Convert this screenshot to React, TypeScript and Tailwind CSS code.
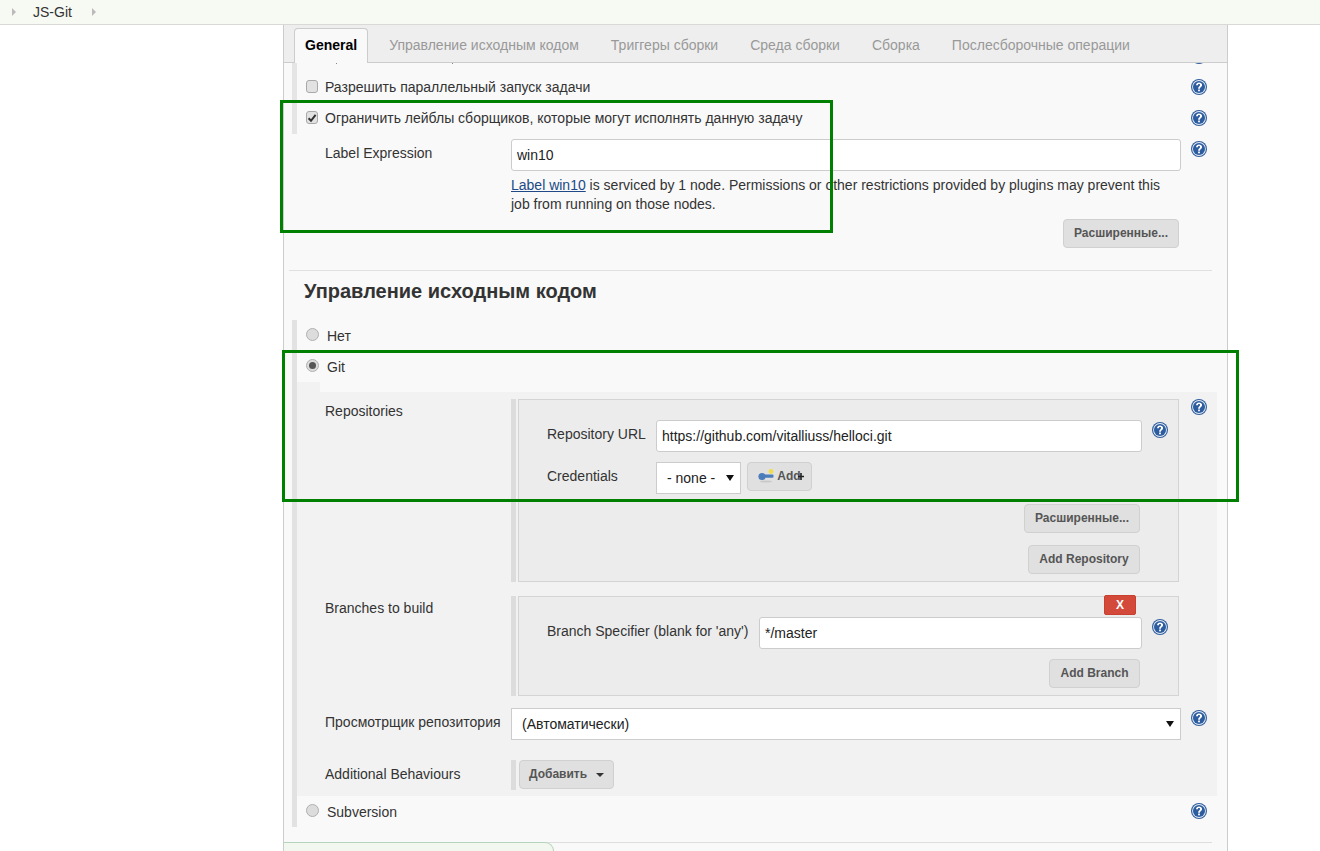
import type { ReactNode } from 'react';

const FONT = "font-['Liberation_Sans',Arial,sans-serif]";

function HelpIcon({ className = '' }: { className?: string }) {
  return (
    <svg width="16" height="16" viewBox="0 0 16 16" className={`shrink-0 ${className}`}>
      <circle cx="8" cy="8" r="8" fill="#2f5d9c" />
      <circle cx="8" cy="8" r="6.9" fill="#e6edf5" />
      <circle cx="8" cy="8" r="6" fill="#2d5c9f" />
      <path
        d="M5 6.2C5 4.5 6.3 3.4 8 3.4s3.1 1 3.1 2.6c0 2.1-2.2 2.1-2.2 3.7H7.1c0-2.4 2-2.5 2-3.7 0-.6-.5-1-1.1-1-.7 0-1.1.5-1.1 1.2z"
        fill="#fff"
      />
      <rect x="7.1" y="10.5" width="1.8" height="1.8" fill="#fff" />
    </svg>
  );
}

function Checkbox({ checked = false }: { checked?: boolean }) {
  return (
    <span className="flex h-[13px] w-[12px] shrink-0 items-center justify-center rounded-[3px] border border-[#a9a9a9] bg-[#e2e2e2]">
      {checked && (
        <svg width="10" height="10" viewBox="0 0 10 10">
          <path d="M1.6 5.2 4 7.8 8.6 1.8" fill="none" stroke="#333" strokeWidth="2" />
        </svg>
      )}
    </span>
  );
}

function Radio({ checked = false }: { checked?: boolean }) {
  return (
    <span className="mb-[3px] flex h-[13px] w-[13px] shrink-0 items-center justify-center rounded-full border border-[#b0b0b0] bg-[#dcdcdc]">
      {checked && <span className="h-[7px] w-[7px] rounded-full bg-[#555]" />}
    </span>
  );
}

function GrayButton({ children, className = '' }: { children: ReactNode; className?: string }) {
  return (
    <button
      type="button"
      className={`flex h-[29px] shrink-0 items-center justify-center rounded-[4px] border border-[#d0d0d0] bg-[#e0e0e0] pb-[2px] text-[12px] font-bold text-[#555] ${className}`}
    >
      {children}
    </button>
  );
}

function TextInput({ value, className = '' }: { value: string; className?: string }) {
  return (
    <input
      readOnly
      value={value}
      className={`h-[32px] rounded-[3px] border border-[#ccc] bg-white px-[5px] text-[14px] text-[#222] outline-none ${className}`}
    />
  );
}

function SelectBox({ value, className = '' }: { value: string; className?: string }) {
  return (
    <div className={`relative flex h-[32px] items-center border border-[#ccc] bg-white pl-[10px] text-[14px] text-[#222] ${className}`}>
      {value}
      <span className="absolute right-[6px] top-[12px] h-0 w-0 border-x-[4px] border-t-[6px] border-x-transparent border-t-[#111]" />
    </div>
  );
}

function CheckRow({ label, checked }: { label: string; checked?: boolean }) {
  return (
    <div className="flex h-[31px] items-center pl-[9px] pr-[20px]">
      <Checkbox checked={checked} />
      <span className="ml-[7px] flex-1 pt-[2px] text-[14px]">{label}</span>
      <HelpIcon />
    </div>
  );
}

function RadioRow({ label, help }: { label: string; help?: boolean }) {
  return (
    <div className="flex h-[31px] items-center pl-[9px] pr-[10px]">
      <Radio />
      <span className="ml-[8px] flex-1 pt-[2px] text-[14px]">{label}</span>
      {help && <HelpIcon className="mb-[2px]" />}
    </div>
  );
}

const tabs = ['Управление исходным кодом', 'Триггеры сборки', 'Среда сборки', 'Сборка', 'Послесборочные операции'];

export default function App() {
  return (
    <div className={`${FONT} relative h-[851px] w-[1320px] overflow-hidden bg-white text-[14px] text-[#333]`}>
      {/* breadcrumbs */}
      <div className="flex h-[25px] items-center border-b border-[#d9dad5] bg-[#f7f9f3] pl-[12px] text-[14px]">
        <span className="h-0 w-0 border-y-[4px] border-l-[4px] border-y-transparent border-l-[#bbb]" />
        <span className="ml-[17px]">JS-Git</span>
        <span className="ml-[20px] h-0 w-0 border-y-[4px] border-l-[4px] border-y-transparent border-l-[#bbb]" />
      </div>

      <div className="relative ml-[283px] h-[826px] w-[945px] overflow-hidden border-x border-[#ccc] bg-[#f9f9f9]">
        {/* tabs */}
        <div className="flex h-[38px] items-end border-b border-[#ccc] bg-[#eee] pl-[10px]">
          <div className="-mb-px flex h-[35px] items-center rounded-t-[4px] border border-b-0 border-[#ccc] bg-[#f9f9f9] px-[10px] pb-[2px] font-bold text-black">
            General
          </div>
          <div className="ml-[5px] flex">
            {tabs.map((t) => (
              <div key={t} className="flex h-[34px] items-center px-[16px] text-[#999]">
                {t}
              </div>
            ))}
          </div>
        </div>

        {/* general options */}
        <div className="ml-[8px] h-[71px] border-l-[5px] border-[#e5e5e5]">
          <div className="flex h-[8px] items-start overflow-hidden pl-[9px] pr-[20px]">
            <span className="ml-[30px] h-px w-px bg-[#888]" />
            <span className="ml-[115px] h-px w-px bg-[#888]" />
            <HelpIcon className="-mt-[15px] ml-auto" />
          </div>
          <CheckRow label="Разрешить параллельный запуск задачи" />
          <CheckRow label="Ограничить лейблы сборщиков, которые могут исполнять данную задачу" checked />
        </div>

        <div className="pl-[41px] pr-[20px] pt-[5px]">
          <div className="flex items-start">
            <div className="w-[186px] pt-[4px]">Label Expression</div>
            <TextInput value="win10" className="w-[670px]" />
            <HelpIcon className="ml-[10px] mt-[2px]" />
          </div>
          <div className="ml-[186px] mt-[5px] w-[670px] text-[14px] leading-[19px]">
            <div>
              <a className="text-[#204a87] underline">Label win10</a>
              <span> is serviced by 1 node. Permissions or other restrictions provided by plugins may prevent this</span>
            </div>
            <div>job from running on those nodes.</div>
          </div>
          <div className="ml-[186px] mt-[5px] flex w-[668px] justify-end">
            <GrayButton className="w-[116px]">Расширенные...</GrayButton>
          </div>
        </div>

        <div className="ml-[5px] mt-[22px] w-[923px] border-t border-[#e0e0e0]" />

        <h3 className="ml-[20px] mt-[8px] h-[41px] text-[20px] font-bold leading-[24px] text-[#333]">
          Управление исходным кодом
        </h3>

        {/* source control */}
        <div className="ml-[8px] w-[925px] border-l-[5px] border-[#e2e2e2]">
          <RadioRow label="Нет" />
          <div className="flex h-[31px] items-center pl-[9px]">
            <Radio checked />
            <span className="ml-[8px] pt-[2px]">Git</span>
          </div>
          <div className="h-[10px] w-[23px] bg-[#f2f2f2]" />

          <div className="h-[404px] bg-[#f2f2f2] pl-[28px] pt-[7px]">
            {/* repositories */}
            <div className="flex items-start">
              <div className="w-[186px] pt-[2px]">Repositories</div>
              <div className="flex border-l-[5px] border-[#dcdcdc] pl-[2px]">
                <div className="w-[661px] border border-[#d4d4d4] bg-[#ececec] pb-[7px] pl-[28px] pr-[10px] pt-[20px]">
                  <div className="flex items-start">
                    <div className="w-[109px] pt-[4px]">Repository URL</div>
                    <TextInput value="https://github.com/vitalliuss/helloci.git" className="w-[486px]" />
                    <HelpIcon className="ml-[10px] mt-[2px]" />
                  </div>
                  <div className="mt-[10px] flex items-start">
                    <div className="w-[109px] pt-[4px]">Credentials</div>
                    <SelectBox value="- none -" className="w-[85px]" />
                    <GrayButton className="relative ml-[6px] w-[65px]">
                      <svg width="16" height="14" viewBox="0 0 16 14" className="mr-[3px]">
                        <circle cx="13" cy="2.5" r="2.4" fill="#f2dc4e" />
                        <ellipse cx="8" cy="12.5" rx="6" ry="1" fill="#c9c9c9" />
                        <circle cx="4" cy="7.5" r="3.6" fill="#4c7dbb" />
                        <rect x="5" y="5.6" width="10.5" height="3.2" rx="1" fill="#4c7dbb" />
                      </svg>
                      Add
                      <svg width="8" height="10" viewBox="0 0 8 10" className="absolute left-[49px] top-[9px]">
                        <path d="M4 1v7M1 4.5h6" stroke="#222" strokeWidth="1.6" />
                      </svg>
                    </GrayButton>
                  </div>
                  <div className="mr-[28px] mt-[10px] flex justify-end">
                    <GrayButton className="w-[116px]">Расширенные...</GrayButton>
                  </div>
                  <div className="mr-[28px] mt-[12px] flex justify-end">
                    <GrayButton className="w-[112px]">Add Repository</GrayButton>
                  </div>
                </div>
              </div>
              <HelpIcon className="ml-[12px]" />
            </div>

            {/* branches */}
            <div className="mt-[14px] flex items-start">
              <div className="w-[186px] pt-[2px]">Branches to build</div>
              <div className="flex border-l-[5px] border-[#dcdcdc] pl-[2px]">
                <div className="relative w-[661px] border border-[#d4d4d4] bg-[#ececec] pb-[7px] pl-[28px] pr-[10px] pt-[20px]">
                  <button
                    type="button"
                    className="absolute right-[42px] top-[-2px] flex h-[20px] w-[32px] items-center justify-center rounded-[2px] border border-[#c9402f] bg-[#d44a3a] text-[12px] font-bold text-white"
                  >
                    X
                  </button>
                  <div className="flex items-start">
                    <div className="w-[212px] pt-[4px]">Branch Specifier (blank for 'any')</div>
                    <TextInput value="*/master" className="w-[383px]" />
                    <HelpIcon className="ml-[10px] mt-[2px]" />
                  </div>
                  <div className="mr-[28px] mt-[10px] flex justify-end">
                    <GrayButton className="w-[91px]">Add Branch</GrayButton>
                  </div>
                </div>
              </div>
            </div>

            {/* browser */}
            <div className="mt-[12px] flex items-start">
              <div className="w-[186px] pt-[4px]">Просмотрщик репозитория</div>
              <SelectBox value="(Автоматически)" className="w-[670px]" />
              <HelpIcon className="ml-[10px] mt-[2px]" />
            </div>

            {/* behaviours */}
            <div className="mt-[20px] flex items-start">
              <div className="w-[186px] pt-[4px]">Additional Behaviours</div>
              <div className="flex h-[30px] border-l-[5px] border-[#dcdcdc] pl-[3px]">
                <GrayButton className="w-[95px]">
                  Добавить
                  <span className="ml-[9px] mt-[2px] h-0 w-0 border-x-[4px] border-t-[4px] border-x-transparent border-t-[#333]" />
                </GrayButton>
              </div>
            </div>
          </div>

          <RadioRow label="Subversion" help />
        </div>

        <div className="ml-[5px] mt-[15px] w-[923px] border-t border-[#ddd]" />

        {/* bottom bar, stuck over the panel */}
        <div className="absolute bottom-0 left-0 h-[9px] w-[270px] rounded-tr-[18px] border-r border-t border-[#b4d4bc] bg-[#f2f7f0]" />
      </div>

      {/* green annotation frames drawn on the screenshot */}
      <div className="absolute left-[280px] top-[100px] h-[133px] w-[553px] border-[3px] border-[#008000]" />
      <div className="absolute left-[282px] top-[350px] h-[152px] w-[957px] border-[3px] border-[#008000]" />
    </div>
  );
}
